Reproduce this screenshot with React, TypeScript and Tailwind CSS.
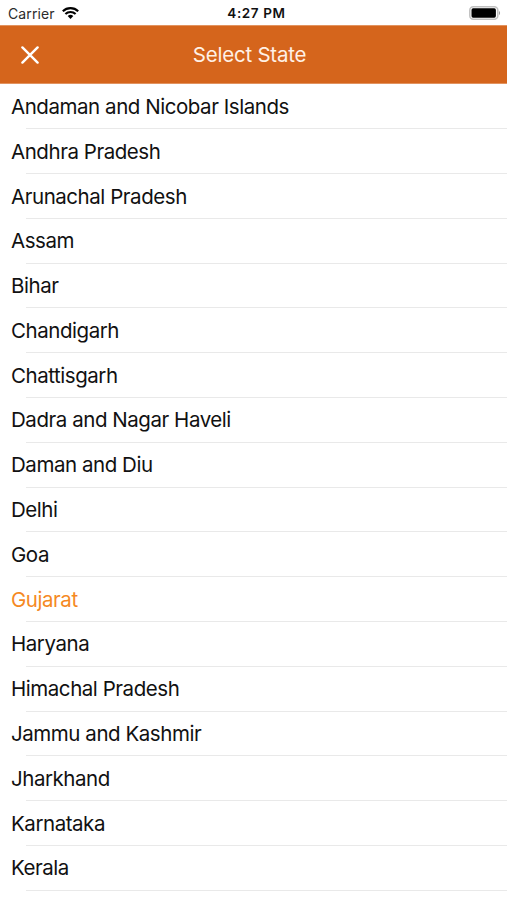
const states = [
  'Andaman and Nicobar Islands',
  'Andhra Pradesh',
  'Arunachal Pradesh',
  'Assam',
  'Bihar',
  'Chandigarh',
  'Chattisgarh',
  'Dadra and Nagar Haveli',
  'Daman and Diu',
  'Delhi',
  'Goa',
  'Gujarat',
  'Haryana',
  'Himachal Pradesh',
  'Jammu and Kashmir',
  'Jharkhand',
  'Karnataka',
  'Kerala',
];

const selected = 'Gujarat';

function StatusBar() {
  return (
    <div className="grid h-[25px] shrink-0 grid-cols-3 items-center pt-[2px] pr-[6px] pl-[8px] text-[14px]">
      <div className="flex items-center gap-[7px] text-[#2b2b2b]">
        <span className="tracking-[0.1px]">Carrier</span>
        <svg className="mb-[2px]" width="17" height="12" viewBox="0 0 17 12" fill="none" stroke="black" strokeWidth="2.1">
          <path d="M.8 4.3a11 11 0 0 1 15.4 0M3.4 7.1a7.2 7.2 0 0 1 10.2 0" />
          <path d="M5.7 9a4 4 0 0 1 5.6 0l-2.8 2.9z" fill="black" stroke="none" />
        </svg>
      </div>
      <span className="pl-[4px] text-center text-[13.5px] font-semibold tracking-[0.6px] whitespace-nowrap text-[#111111]">4:27 PM</span>
      <svg className="mb-[2px] justify-self-end" width="32" height="14" viewBox="0 0 32 14">
        <rect x=".8" y=".8" width="28" height="12.4" rx="3.5" fill="none" stroke="#c0c0c0" strokeWidth="1.5" />
        <rect x="2.5" y="2.3" width="24.4" height="9.4" rx="1.6" />
        <path d="M30 5c1.4.8 1.4 3.2 0 4z" fill="#999" />
      </svg>
    </div>
  );
}

export default function App() {
  return (
    <main className="flex h-[900px] w-full flex-col overflow-hidden bg-white font-['Inter',sans-serif] text-[#111111]">
      <StatusBar />
      <header className="grid h-[59px] shrink-0 grid-cols-[60px_1fr_68px] items-center border-y border-t-[#e2935f] border-b-[#e2935f] bg-[#d5651c] text-white">
        <button className="flex justify-center" aria-label="Close">
          <svg width="18" height="18" viewBox="0 0 18 18" stroke="white" strokeWidth="2.4" strokeLinecap="round">
            <path d="M1.4 1.4l15.2 15.2M16.6 1.4L1.4 16.6" />
          </svg>
        </button>
        <h1 className="pt-[2px] text-center text-[20.5px] tracking-[-0.22px] text-[#fff1e6]">Select State</h1>
      </header>
      <ul className="flex flex-col pt-[0.4px]">
        {states.map((name) => (
          <li key={name} className="flex h-[44.8px] shrink-0 flex-col">
            <span
              className={`flex flex-1 items-center pt-[2px] pl-[11px] text-[20.5px] tracking-[-0.45px] ${name === selected ? 'text-[#f5891f]' : ''}`}
            >
              {name}
            </span>
            <span className="ml-[26px] h-px bg-[#e9e9e9]" />
          </li>
        ))}
      </ul>
    </main>
  );
}
